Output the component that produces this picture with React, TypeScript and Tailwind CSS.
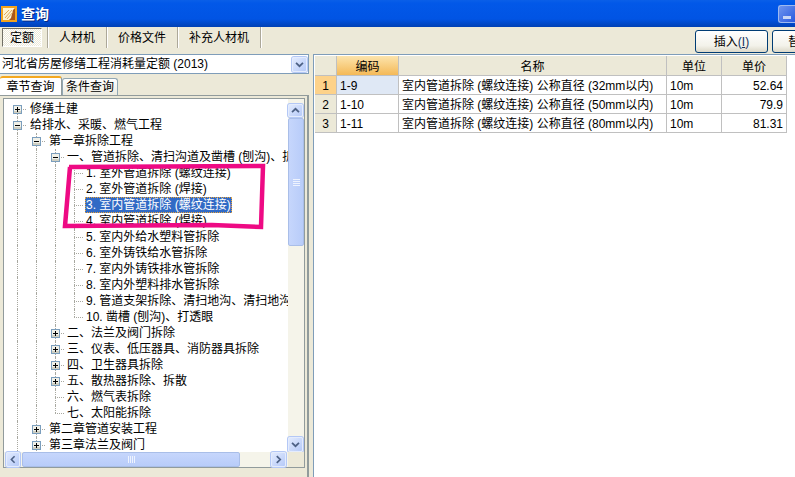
import React from 'react';

type TreeNode = {
    level: number;
    text: string;
    toggle?: 'plus' | 'minus';
    first?: boolean;
    last?: boolean;
    selected?: boolean;
};

const treeNodes: TreeNode[] = [
    { level: 0, text: '修缮土建', toggle: 'plus', first: true },
    { level: 0, text: '给排水、采暖、燃气工程', toggle: 'minus' },
    { level: 1, text: '第一章拆除工程', toggle: 'minus' },
    { level: 2, text: '一、管道拆除、清扫沟道及凿槽 (刨沟)、拆除', toggle: 'minus' },
    { level: 3, text: '1. 室外管道拆除 (螺纹连接)' },
    { level: 3, text: '2. 室外管道拆除 (焊接)' },
    { level: 3, text: '3. 室内管道拆除 (螺纹连接)', selected: true },
    { level: 3, text: '4. 室内管道拆除 (焊接)' },
    { level: 3, text: '5. 室内外给水塑料管拆除' },
    { level: 3, text: '6. 室外铸铁给水管拆除' },
    { level: 3, text: '7. 室内外铸铁排水管拆除' },
    { level: 3, text: '8. 室内外塑料排水管拆除' },
    { level: 3, text: '9. 管道支架拆除、清扫地沟、清扫地沟盖板' },
    { level: 3, text: '10. 凿槽 (刨沟)、打透眼', last: true },
    { level: 2, text: '二、法兰及阀门拆除', toggle: 'plus' },
    { level: 2, text: '三、仪表、低压器具、消防器具拆除', toggle: 'plus' },
    { level: 2, text: '四、卫生器具拆除', toggle: 'plus' },
    { level: 2, text: '五、散热器拆除、拆散', toggle: 'plus' },
    { level: 2, text: '六、燃气表拆除' },
    { level: 2, text: '七、太阳能拆除', last: true },
    { level: 1, text: '第二章管道安装工程', toggle: 'plus' },
    { level: 1, text: '第三章法兰及阀门', toggle: 'plus' },
];

const rows = [
    { no: 1, code: '1-9', name: '室内管道拆除 (螺纹连接) 公称直径 (32mm以内)', unit: '10m', price: '52.64' },
    { no: 2, code: '1-10', name: '室内管道拆除 (螺纹连接) 公称直径 (50mm以内)', unit: '10m', price: '79.9' },
    { no: 3, code: '1-11', name: '室内管道拆除 (螺纹连接) 公称直径 (80mm以内)', unit: '10m', price: '81.31' },
];

const menuItems = ['人材机', '价格文件', '补充人材机'];

const guideLeft = (level: number) => 13 + level * 19;
const textIndent = ['pl-[25px]', 'pl-[44px]', 'pl-[62px]', 'pl-[81px]'];

const Toggle = ({ type, level }: { type: 'plus' | 'minus'; level: number }) => (
    <svg
        width="9"
        height="9"
        viewBox="0 0 9 9"
        className="absolute top-[4px]"
        style={{ left: guideLeft(level) - 4 }}
    >
        <rect x="0.5" y="0.5" width="8" height="8" fill="#f0f0e8" stroke="#7b9ebd" />
        <rect x="1" y="6" width="7" height="2" fill="#cfcfc2" />
        <path d={type === 'plus' ? 'M2 4.5h5M4.5 2v5' : 'M2 4.5h5'} stroke="#000" fill="none" />
    </svg>
);

const TreeRow = ({ node }: { node: TreeNode }) => {
    const guides = Array.from({ length: node.level + 1 }, (_, i) => i);
    return (
        <div className={`relative h-4 whitespace-nowrap leading-4 ${textIndent[node.level]}`}>
            {guides.map((g) => {
                const own = g === node.level;
                return (
                    <span
                        key={g}
                        className={`absolute border-l border-dotted border-[#a8a8a0] ${
                            own && node.first ? 'top-2 bottom-0' : own && node.last ? 'top-0 h-2' : 'inset-y-0'
                        }`}
                        style={{ left: guideLeft(g) }}
                    />
                );
            })}
            <span
                className="absolute top-2 w-[9px] border-t border-dotted border-[#a8a8a0]"
                style={{ left: guideLeft(node.level) }}
            />
            {node.toggle && <Toggle type={node.toggle} level={node.level} />}
            <span
                className={`relative inline-block h-4 px-px ${
                    node.selected ? 'bg-[#316ac5] text-white outline-1 outline-dotted outline-offset-[-1px] outline-[#e8a33a]' : ''
                }`}
            >
                {node.text}
            </span>
        </div>
    );
};

const ScrollButton = ({ dir, className }: { dir: 'up' | 'down' | 'left' | 'right'; className: string }) => {
    const paths = {
        up: 'M3.5 9.5 7.5 5.5 11.5 9.5',
        down: 'M3.5 5.5 7.5 9.5 11.5 5.5',
        left: 'M9.5 3.5 5.5 7.5 9.5 11.5',
        right: 'M5.5 3.5 9.5 7.5 5.5 11.5',
    };
    return (
        <div
            className={`flex items-center justify-center rounded-[2px] border border-[#e4ecfd] bg-[linear-gradient(135deg,#e1eafe,#b6caf8)] shadow-[0_0_0_1px_#b4c8f6] ${className}`}
        >
            <svg width="15" height="15" viewBox="0 0 15 15">
                <path d={paths[dir]} fill="none" stroke="#4d6185" strokeWidth="2" />
            </svg>
        </div>
    );
};

const VerticalScrollbar = () => (
    <div className="flex w-4 shrink-0 flex-col bg-[#f5f4ea] pt-[5px]">
        <ScrollButton dir="up" className="h-[13px] w-[15px] shrink-0" />
        <div className="mt-px flex h-[128px] shrink-0 flex-col items-center justify-center gap-px rounded-[2px] border border-[#a9bee8] bg-[linear-gradient(90deg,#c6d6fc,#b8ccf9)]">
            {[0, 1, 2, 3].map((i) => (
                <span key={i} className="h-px w-[7px] bg-[#eef3fe]" />
            ))}
        </div>
        <div className="flex-1" />
        <ScrollButton dir="down" className="h-[15px] w-[15px] shrink-0" />
    </div>
);

const HorizontalScrollbar = () => (
    <div className="flex h-[15px] shrink-0 items-stretch bg-[#f5f4ea] pl-[2px]">
        <ScrollButton dir="left" className="w-[14px] shrink-0" />
        <div className="ml-[2px] flex w-[218px] shrink-0 items-center justify-center gap-px rounded-[2px] border border-[#a9bee8] bg-[linear-gradient(180deg,#c6d6fc,#b8ccf9)]">
            {[0, 1, 2, 3].map((i) => (
                <span key={i} className="h-[7px] w-px bg-[#eef3fe]" />
            ))}
        </div>
        <div className="flex-1" />
        <ScrollButton dir="right" className="mr-[2px] w-[15px] shrink-0" />
        <div className="w-4 shrink-0 bg-[#ece9d8]" />
    </div>
);

const AppIcon = () => (
    <svg width="16" height="16" viewBox="0 0 16 16" className="shrink-0">
        <rect width="16" height="16" fill="#f2a31e" />
        <rect x="2" y="2" width="12" height="12" fill="#a8551a" />
        <path d="M2 2H14L12 4 10 12 8 14H2Z" fill="#fdf3d2" />
        <path d="M4 12 11 4M3 9 8 4M6 13 12 6" stroke="#e0a95a" fill="none" />
    </svg>
);

const ActionButton = ({ label, hotkey }: { label: string; hotkey: string }) => (
    <button className="flex h-[23px] w-[73px] shrink-0 items-center justify-center rounded-[3px] border border-[#003c74] bg-[linear-gradient(180deg,#ffffff,#f3f2ea_70%,#dcd8c8)] text-black">
        {label}
        <span className="text-[#14335f]">
            (<span className="underline">{hotkey}</span>)
        </span>
    </button>
);

export default function App() {
    return (
        <div className="relative flex h-[477px] w-[795px] flex-col overflow-hidden bg-[#ece9d8] font-['Liberation_Sans','Noto_Sans_CJK_SC',sans-serif] text-xs text-black">
            {/* title bar */}
            <div className="flex h-[27px] shrink-0 items-center bg-[linear-gradient(180deg,#0a5fe8_0%,#0258e8_12%,#0154e4_70%,#0040b4_100%)] pl-[1px]">
                <AppIcon />
                <span className="ml-1 text-sm font-bold text-white [text-shadow:1px_1px_0_#0a2a80]">查询</span>
                <div className="ml-auto flex h-[18px] w-[17px] items-end rounded-l-[3px] border border-r-0 border-[#9db9f0] bg-[linear-gradient(135deg,#6f95ee,#2a5ae0)] pb-[3px] pl-1">
                    <span className="h-[3px] w-[8px] bg-[#c9d6f6]" />
                </div>
            </div>

            {/* tabs and actions */}
            <div className="flex h-[27px] shrink-0">
                <div className="flex h-[21px] w-[695px] shrink-0 items-stretch">
                    <div className="flex w-[48px] items-center border-r border-[#aca899] pb-px pl-[2px] pt-px shadow-[1px_0_0_#fff]">
                        <div className="flex h-[19px] w-10 items-center justify-center border border-b-white border-l-[#716f64] border-r-white border-t-[#716f64] bg-[repeating-conic-gradient(#ece9d8_0_25%,#ffffff_0_50%)] bg-[length:2px_2px]">
                            定额
                        </div>
                    </div>
                    {menuItems.map((item) => (
                        <div
                            key={item}
                            className="flex items-center border-r border-[#aca899] px-[11px] shadow-[1px_0_0_#fff]"
                        >
                            {item}
                        </div>
                    ))}
                </div>
                <div className="flex gap-1 pt-[3px]">
                    <ActionButton label="插入" hotkey="I" />
                    <ActionButton label="替换" hotkey="R" />
                </div>
            </div>

            <div className="flex min-h-0 flex-1 gap-1">
                {/* left pane */}
                <div className="flex w-[309px] shrink-0 flex-col">
                    <div className="flex h-5 shrink-0 items-center justify-between border border-l-0 border-[#7f9db9] bg-white pl-[2px] pr-px">
                        <span>河北省房屋修缮工程消耗量定额 (2013)</span>
                        <ScrollButton dir="down" className="h-[15px] w-[15px]" />
                    </div>

                    <div className="mt-[2px] flex h-[19px] shrink-0 items-end">
                        <div className="flex h-[19px] w-[62px] items-center justify-center rounded-t-[3px] border-t-2 border-r border-[#f4a820] border-r-[#919b9c] bg-white">
                            章节查询
                        </div>
                        <div className="flex h-[17px] w-[56px] items-center justify-center rounded-t-[3px] border border-b-0 border-[#91a7b4] bg-[linear-gradient(180deg,#ffffff,#ecebe0)]">
                            条件查询
                        </div>
                    </div>

                    <div className="flex min-h-0 flex-1 flex-col border-r-2 border-t border-[#919b9c] pb-[9px] pl-[3px] pr-[2px] pt-[2px]">
                        <div className="flex min-h-0 flex-1 flex-col border border-[#919b9c] bg-white">
                            <div className="flex min-h-0 flex-1">
                                <div className="min-w-0 flex-1 overflow-hidden pt-[2px]">
                                    {treeNodes.map((node) => (
                                        <TreeRow key={node.text} node={node} />
                                    ))}
                                </div>
                                <VerticalScrollbar />
                            </div>
                            <HorizontalScrollbar />
                        </div>
                    </div>
                </div>

                {/* right pane */}
                <div className="min-w-0 flex-1 border-l border-t border-[#7f9db9] bg-white pl-px pt-px">
                    <div className="grid grid-cols-[22px_62px_268px_55px_65px] grid-rows-[20px_19px_19px_19px] w-[472px]">
                        <div className="border-b border-r border-[#c0c0c0] bg-[#ece9d8]" />
                        <div className="flex items-center justify-center border-b border-r border-[#c0c0c0] bg-[linear-gradient(180deg,#fce4ad,#f4b957)] pt-[2px]">
                            编码
                        </div>
                        <div className="flex items-center justify-center border-b border-r border-[#c0c0c0] bg-[#ece9d8] pt-[2px]">名称</div>
                        <div className="flex items-center justify-center border-b border-r border-[#c0c0c0] bg-[#ece9d8] pt-[2px]">单位</div>
                        <div className="flex items-center justify-center border-b border-r border-[#c0c0c0] bg-[#ece9d8] pt-[2px]">单价</div>
                        {rows.map((row, i) => (
                            <React.Fragment key={row.no}>
                                <div
                                    className={`flex items-center justify-center border-b border-r border-[#c0c0c0] pt-[2px] ${
                                        i === 0 ? 'bg-[#fdd28a]' : 'bg-[#ece9d8]'
                                    }`}
                                >
                                    {row.no}
                                </div>
                                <div
                                    className={`flex items-center border-b border-r border-[#c0c0c0] pl-[3px] pt-[2px] ${
                                        i === 0 ? 'bg-[#dfe8f5]' : ''
                                    }`}
                                >
                                    {row.code}
                                </div>
                                <div className="flex items-center whitespace-nowrap border-b border-r border-[#c0c0c0] pl-[3px] pt-[2px]">
                                    {row.name}
                                </div>
                                <div className="flex items-center border-b border-r border-[#c0c0c0] pl-[3px] pt-[2px]">{row.unit}</div>
                                <div className="flex items-center justify-end border-b border-r border-[#c0c0c0] pr-[3px] pt-[2px]">
                                    {row.price}
                                </div>
                            </React.Fragment>
                        ))}
                    </div>
                </div>
            </div>

            {/* hand-drawn annotation over the tree */}
            <svg className="pointer-events-none absolute left-0 top-0" width="795" height="477">
                <path
                    d="M69 167 L263 166 L261 227 L212 225 L65 226 L70 167"
                    fill="none"
                    stroke="#ee0a84"
                    strokeWidth="4.5"
                />
            </svg>
        </div>
    );
}
